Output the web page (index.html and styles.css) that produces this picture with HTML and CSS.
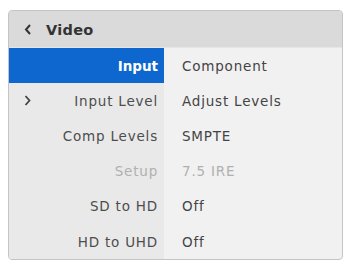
FILE: index.html
```html
<!DOCTYPE html>
<html lang="en">
<head>
    <meta charset="UTF-8">
    <title>Video</title>
    <link rel="stylesheet" href="styles.css">
</head>
<body>
    <div class="panel">
        <div class="header">
            <span class="back">
                <svg width="8" height="11" viewBox="0 0 8 11"><path d="M6 1 L2 5.5 L6 10" fill="none" stroke="#333" stroke-width="2"/></svg>
            </span>
            <span class="title">Video</span>
        </div>
        <div class="row selected">
            <div class="label">Input</div>
            <div class="value">Component</div>
        </div>
        <div class="row">
            <div class="label">
                <svg class="more" width="7" height="11" viewBox="0 0 7 11"><path d="M1.5 1 L5.5 5.5 L1.5 10" fill="none" stroke="#444" stroke-width="1.8"/></svg>
                Input Level
            </div>
            <div class="value">Adjust Levels</div>
        </div>
        <div class="row">
            <div class="label">Comp Levels</div>
            <div class="value">SMPTE</div>
        </div>
        <div class="row disabled">
            <div class="label">Setup</div>
            <div class="value">7.5 IRE</div>
        </div>
        <div class="row">
            <div class="label">SD to HD</div>
            <div class="value">Off</div>
        </div>
        <div class="row">
            <div class="label">HD to UHD</div>
            <div class="value">Off</div>
        </div>
    </div>
</body>
</html>
```

FILE: styles.css
```css
body {
    margin: 0;
    padding: 10px 4px 2px 8px;
    background: #fff;
    font-family: "DejaVu Sans", Verdana, sans-serif;
    font-size: 13.5px;
    letter-spacing: 0.8px;
}
.panel {
    width: 333px;
    border: 1px solid #c4c4c4;
    border-radius: 4px;
    overflow: hidden;
    background: #f1f1f1;
}
.header {
    height: 35px;
    display: flex;
    align-items: center;
    padding-top: 1px;
    background: #dadada;
    border-bottom: 1px solid #e6e6e6;
    color: #333;
    font-weight: bold;
    font-size: 14.5px;
    letter-spacing: 0.3px;
}
.back {
    display: flex;
    margin: 0 14px 0 15px;
}
.row {
    display: flex;
    height: 35.2px;
    align-items: center;
}
.label {
    width: 155px;
    height: 100%;
    box-sizing: border-box;
    padding-right: 6px;
    display: flex;
    align-items: center;
    justify-content: flex-end;
    background: #e9e9e9;
    color: #4d4d4d;
    position: relative;
}
.more {
    position: absolute;
    left: 15px;
    top: 12px;
}
.value {
    padding-left: 18px;
    color: #444;
}
.selected .label {
    background: #0d67cf;
    color: #fff;
    font-weight: bold;
    letter-spacing: 0;
}
.disabled .label,
.disabled .value {
    color: #b0b0b0;
}
```
